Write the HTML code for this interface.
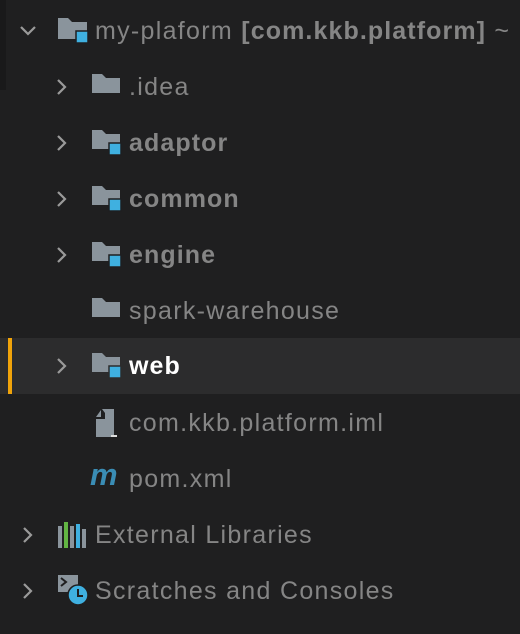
<!DOCTYPE html>
<html><head><style>
body{margin:0;width:520px;height:634px;background:#1f1f20;overflow:hidden;font-family:"Liberation Sans",sans-serif;position:relative}
.strip{position:absolute;left:0;top:0;width:6px;height:90px;background:#19191a}
.row{position:absolute;left:0;width:520px;height:56px}
.sel{background:#2c2c2d}
.bar{position:absolute;left:8px;top:0;width:4px;height:56px;background:#f0a30a}
.t{position:absolute;top:13px;font-size:25px;letter-spacing:1.3px;color:#858585;white-space:nowrap;line-height:30px}
.b{font-weight:bold;letter-spacing:1.1px}
svg{position:absolute}
</style></head><body>
<div class="strip"></div>

<div class="row" style="top:3px">
<svg style="left:18px;top:21px" width="20" height="14"><path d="M3 3l7 7 7-7" stroke="#9a9a9a" stroke-width="2.2" fill="none"/></svg>
<svg style="left:58px;top:15px" width="32" height="26"><path d="M0 0h10l4 4h15v17H0z" fill="#8a949c"/><rect x="18" y="13" width="12" height="12" fill="#3fb0e0" stroke="#1f1f20" stroke-width="1.5"/></svg>
<div class="t" style="left:95px">my-plaform <span class="b">[com.kkb.platform]</span> ~</div>
</div>

<div class="row" style="top:59px">
<svg style="left:55px;top:18px" width="14" height="20"><path d="M3 3l7 7-7 7" stroke="#9a9a9a" stroke-width="2.2" fill="none"/></svg>
<svg style="left:92px;top:15px" width="32" height="26"><path d="M0 0h10l4 4h14v15H0z" fill="#8a949c"/></svg>
<div class="t" style="left:129px">.idea</div>
</div>

<div class="row" style="top:115px">
<svg style="left:55px;top:18px" width="14" height="20"><path d="M3 3l7 7-7 7" stroke="#9a9a9a" stroke-width="2.2" fill="none"/></svg>
<svg style="left:92px;top:15px" width="32" height="26"><path d="M0 0h10l4 4h14v15H0z" fill="#8a949c"/><rect x="17" y="13" width="12" height="12" fill="#3fb0e0" stroke="#1f1f20" stroke-width="1.5"/></svg>
<div class="t b" style="left:129px">adaptor</div>
</div>

<div class="row" style="top:171px">
<svg style="left:55px;top:18px" width="14" height="20"><path d="M3 3l7 7-7 7" stroke="#9a9a9a" stroke-width="2.2" fill="none"/></svg>
<svg style="left:92px;top:15px" width="32" height="26"><path d="M0 0h10l4 4h14v15H0z" fill="#8a949c"/><rect x="17" y="13" width="12" height="12" fill="#3fb0e0" stroke="#1f1f20" stroke-width="1.5"/></svg>
<div class="t b" style="left:129px">common</div>
</div>

<div class="row" style="top:227px">
<svg style="left:55px;top:18px" width="14" height="20"><path d="M3 3l7 7-7 7" stroke="#9a9a9a" stroke-width="2.2" fill="none"/></svg>
<svg style="left:92px;top:15px" width="32" height="26"><path d="M0 0h10l4 4h14v15H0z" fill="#8a949c"/><rect x="17" y="13" width="12" height="12" fill="#3fb0e0" stroke="#1f1f20" stroke-width="1.5"/></svg>
<div class="t b" style="left:129px">engine</div>
</div>

<div class="row" style="top:283px">
<svg style="left:92px;top:15px" width="32" height="26"><path d="M0 0h10l4 4h14v15H0z" fill="#8a949c"/></svg>
<div class="t" style="left:129px">spark-warehouse</div>
</div>

<div class="row sel" style="top:338px">
<div class="bar"></div>
<svg style="left:55px;top:18px" width="14" height="20"><path d="M3 3l7 7-7 7" stroke="#9a9a9a" stroke-width="2.2" fill="none"/></svg>
<svg style="left:92px;top:15px" width="32" height="26"><path d="M0 0h10l4 4h14v15H0z" fill="#8a949c"/><rect x="17" y="13" width="12" height="12" fill="#3fb0e0" stroke="#2c2c2d" stroke-width="1.5"/></svg>
<div class="t b" style="left:129px;color:#fff">web</div>
</div>

<div class="row" style="top:395px">
<svg style="left:95px;top:14px" width="26" height="30"><path d="M7 0h12v28H1V10h9V4z" fill="#8a949c"/><path d="M1 8L6 1v7z" fill="#8a949c"/><rect x="16" y="26" width="6" height="2" fill="#ddd"/></svg>
<div class="t" style="left:129px">com.kkb.platform.iml</div>
</div>

<div class="row" style="top:451px">
<div class="t b" style="left:90px;color:#3a8db5;font-style:italic;font-size:31px;top:9px;letter-spacing:0">m</div>
<div class="t" style="left:129px">pom.xml</div>
</div>

<div class="row" style="top:507px">
<svg style="left:21px;top:18px" width="14" height="20"><path d="M3 3l7 7-7 7" stroke="#9a9a9a" stroke-width="2.2" fill="none"/></svg>
<svg style="left:58px;top:14px" width="30" height="28"><rect x="0" y="5" width="4" height="22" fill="#8a949c"/><rect x="6" y="1" width="4" height="26" fill="#62b543"/><rect x="12" y="5" width="4" height="22" fill="#8a949c"/><rect x="18" y="3" width="4" height="24" fill="#3fb0e0"/><rect x="24" y="8" width="4" height="19" fill="#8a949c"/></svg>
<div class="t" style="left:95px">External Libraries</div>
</div>

<div class="row" style="top:563px">
<svg style="left:21px;top:18px" width="14" height="20"><path d="M3 3l7 7-7 7" stroke="#9a9a9a" stroke-width="2.2" fill="none"/></svg>
<svg style="left:58px;top:12px" width="32" height="32"><rect x="0" y="0" width="20" height="17" fill="#8a949c"/><path d="M3 3l5 4-5 4" stroke="#1f1f20" stroke-width="2" fill="none"/><circle cx="20" cy="20" r="10" fill="#3fb0e0" stroke="#1f1f20" stroke-width="1.5"/><path d="M20 14v7h5" stroke="#1f1f20" stroke-width="2" fill="none"/></svg>
<div class="t" style="left:95px">Scratches and Consoles</div>
</div>
</body></html>
